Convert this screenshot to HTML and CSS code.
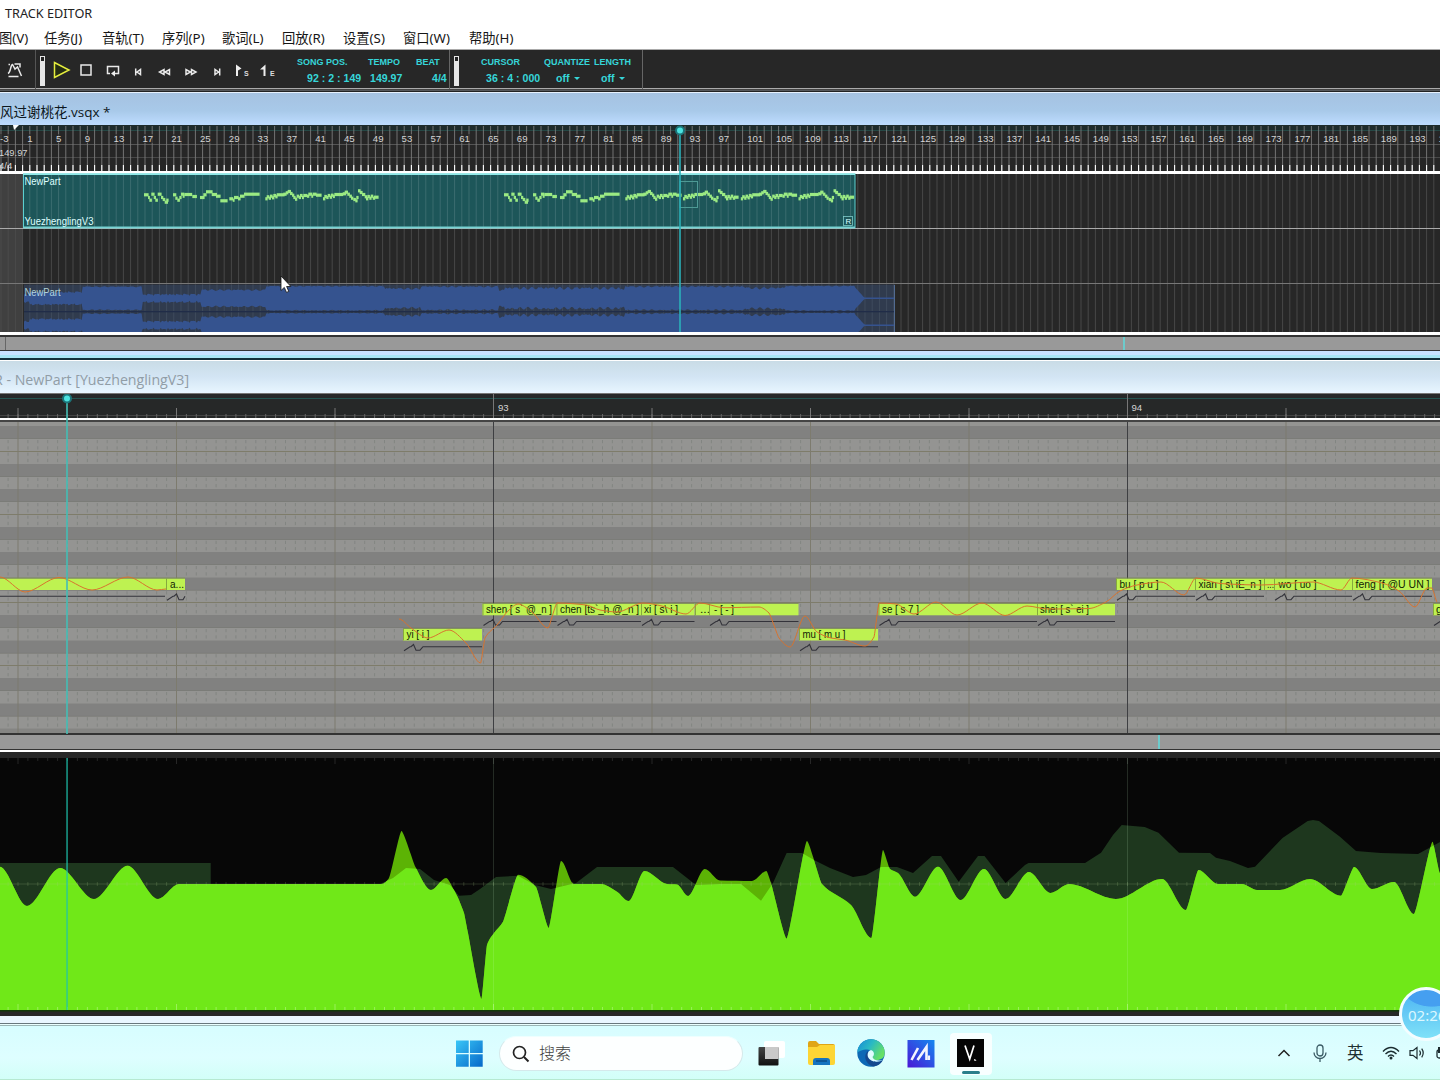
FILE: index.html
```html
<!DOCTYPE html>
<html lang="zh-CN">
<head>
<meta charset="utf-8">
<title>TRACK EDITOR</title>
<link rel="stylesheet" href="styles.css">
</head>
<body>
<div class="screen">
  <header class="titlebar">TRACK EDITOR</header>
  <nav class="menu">
    <span>图(V)</span><span>任务(J)</span><span>音轨(T)</span><span>序列(P)</span><span>歌词(L)</span><span>回放(R)</span><span>设置(S)</span><span>窗口(W)</span><span>帮助(H)</span>
  </nav>
  <div class="toolbar">
    <div class="tool tool-curve"><svg width="18" height="18" viewBox="0 0 18 18"><path d="M2 12.500C5 11 4.500 3.500 6.500 3.500L9 8l2.500-2L15.500 15M4 3.500H2.500M8.500 3H14v3.500M2.500 15.500h10" class="ic"/></svg></div>
    <div class="grip"></div>
    <div class="transport">
      <svg width="26" height="26" viewBox="0 0 26 26"><path d="M6.500 5.500v15L21 13z" fill="#252d12" stroke="#e6ee3e" stroke-width="1.500"/></svg>
      <svg width="26" height="26" viewBox="0 0 26 26"><rect x="7" y="8" width="10" height="10" class="ic"/></svg>
      <svg width="26" height="26" viewBox="0 0 26 26"><path d="M10 16.500H7.500v-7h11v7H14" class="ic"/><path d="M15 13.500v6l-4-3z" class="fl"/></svg>
      <svg width="26" height="26" viewBox="0 0 26 26"><path d="M9.700 11.500v7M14.500 12.500v5l-3.500-2.500z" class="ic"/></svg>
      <svg width="26" height="26" viewBox="0 0 26 26"><path d="M12 12.500v5L7.500 15zM17.500 12.500v5L13 15z" class="ic"/></svg>
      <svg width="26" height="26" viewBox="0 0 26 26"><path d="M8 12.500v5l4.500-2.500zM13.500 12.500v5l4.500-2.500z" class="ic"/></svg>
      <svg width="26" height="26" viewBox="0 0 26 26"><path d="M11 12.500v5l3.500-2.500zM15.700 11.500v7" class="ic"/></svg>
      <svg width="26" height="26" viewBox="0 0 26 26"><path d="M6 7.500l5.500 4-3.500 2V19H6z" class="fl"/><text x="14" y="19" class="tiny">S</text></svg>
      <svg width="26" height="26" viewBox="0 0 26 26"><path d="M9.500 7.500V19h-2v-6.500h-3.500z" class="fl"/><text x="14" y="19" class="tiny">E</text></svg>
    </div>
    <div class="fields">
      <div class="field"><b>SONG POS.</b><i class="pad-a">92 : 2 : 149</i></div>
      <div class="field"><b>TEMPO</b><i class="pad-b">149.97</i></div>
      <div class="field"><b>BEAT</b><i class="pad-c">4/4</i></div>
    </div>
    <div class="grip grip-two"></div>
    <div class="fields fields-two">
      <div class="field"><b>CURSOR</b><i class="pad-d">36 : 4 : 000</i></div>
      <div class="field"><b>QUANTIZE</b><i class="pad-e">off<u></u></i></div>
      <div class="field"><b>LENGTH</b><i class="pad-f">off<u></u></i></div>
    </div>
  </div>
  <div class="caption caption-track">风过谢桃花.vsqx *</div>
  <svg class="pane" id="track" width="1440" height="207" viewBox="0 125 1440 207"></svg>
  <div class="hscroll hscroll-track"><div class="thumb-edge"></div><div class="play-mark mark-one"></div></div>
  <div class="frame-edge"></div>
  <div class="caption caption-piano">R - NewPart [YuezhenglingV3]</div>
  <svg class="pane" id="piano" width="1440" height="340" viewBox="0 394 1440 340"></svg>
  <div class="hscroll hscroll-piano"><div class="play-mark mark-two"></div></div>
  <svg class="pane" id="param" width="1440" height="264" viewBox="0 752 1440 264"></svg>
  <div class="window-edge"></div>
  <footer class="taskbar">
    <svg class="win" width="27" height="28" viewBox="0 0 27 28"><defs><linearGradient id="gw" x1="0" y1="0" x2="1" y2="1"><stop offset="0" stop-color="#39c6f7"/><stop offset="1" stop-color="#0668c9"/></linearGradient></defs><path d="M0 .5h12.700V13H0zM14 .5h12.700V13H14zM0 14.200h12.700v12.500H0zM14 14.200h12.700v12.500H14z" fill="url(#gw)"/></svg>
    <div class="search"><svg width="18" height="18" viewBox="0 0 18 18"><circle cx="7.500" cy="7.500" r="6" fill="none" stroke="#222" stroke-width="1.700"/><path d="M12 12l4.500 4.500" stroke="#222" stroke-width="2"/></svg><span>搜索</span></div>
    <svg class="app" width="50" height="44" viewBox="0 0 50 44"><defs><linearGradient id="gt" x1="0" y1="0" x2="0" y2="1"><stop offset="0" stop-color="#444"/><stop offset="1" stop-color="#111"/></linearGradient></defs><rect x="20" y="12" width="21" height="17" rx="2" fill="#fff"/><rect x="14.500" y="18" width="20" height="18.500" rx="1" fill="url(#gt)"/><path d="M21 18h13.500v12H21z" fill="#c9c9c9"/></svg>
    <svg class="app" width="50" height="44" viewBox="0 0 50 44"><path d="M13 14q0-2 2-2h6l3 3h14q2 0 2 2v10H13z" fill="#e0a516"/><path d="M13 18h9l3-2h15v18q0 2-2 2H15q-2 0-2-2z" fill="#fdd535"/><path d="M18 36v-4q0-3 3-3h11q3 0 3 3v4z" fill="#1673bf"/><path d="M21 32h11" stroke="#0c4c89" stroke-width="1.500"/></svg>
    <svg class="app" width="50" height="44" viewBox="0 0 50 44"><defs><linearGradient id="ge" x1="0" y1="0" x2="1" y2=".5"><stop offset="0" stop-color="#1689d8"/><stop offset=".5" stop-color="#29b9c4"/><stop offset="1" stop-color="#66e067"/></linearGradient></defs><circle cx="26" cy="24" r="13.700" fill="#0d68b5"/><path d="M12.300 24a13.700 13.700 0 0 1 27.400 0c0 5-4 7-8 7-3.500 0-5.500-1.500-4.500-3 3-4-1-7.500-5-7.500-5 0-9 2-9.900 3.500z" fill="url(#ge)"/><path d="M23 22c-5 4-3 13 5 15.500 5-.5 8-3 10-6.500-5 3-12 2-14-3z" fill="#14488f"/><path d="M27.500 28c3-3 1-6-1.500-7-3 1-4 4-3 7 2 5 10 6 15 3-4 1-9 1-10.500-3z" fill="#dffcff"/></svg>
    <svg class="app" width="50" height="44" viewBox="0 0 50 44"><defs><linearGradient id="gm" x1="0" y1="1" x2="1" y2="0"><stop offset="0" stop-color="#4a16d6"/><stop offset="1" stop-color="#1488ef"/></linearGradient></defs><rect x="11.500" y="11" width="27" height="27.500" fill="url(#gm)"/><path d="M15.500 31l6.500-12M21.500 31l9-13v13" fill="none" stroke="#f4f4ff" stroke-width="2.600"/><path d="M33 26.500v4.500" stroke="#f4f4ff" stroke-width="2.200"/></svg>
    <div class="active-app"><svg width="27" height="28" viewBox="0 0 27 28"><path d="M0 0h27v28H0z" fill="#050505"/><path d="M8 6.500l4.700 13.500 4.300-13.500" fill="none" stroke="#fff" stroke-width="1.700"/><path d="M17.500 20l1.500 1.500h-1.500z" fill="#ddd" stroke="#ddd" stroke-width=".7"/></svg><div class="active-line"></div></div>
    <div class="tray">
      <svg width="14" height="10" viewBox="0 0 14 10"><path d="M1.500 8L7 2.500 12.500 8" fill="none" stroke="#222" stroke-width="1.500"/></svg>
      <svg class="mic" width="14" height="19" viewBox="0 0 14 19"><rect x="4" y="1" width="6" height="11" rx="3" fill="none" stroke="#3c5c66" stroke-width="1.300"/><path d="M1 8.500a6 6 0 0 0 12 0M7 14.500V18" fill="none" stroke="#3c5c66" stroke-width="1.300"/></svg>
      <span class="ime">英</span>
      <svg class="wifi" width="18" height="14" viewBox="0 0 18 14"><path d="M1 5.500q8-8 16 0M3.500 8q5.500-5.500 11 0M6 10.500q3-3 6 0" fill="none" stroke="#1b2c30" stroke-width="1.400"/><circle cx="9" cy="12" r="1.500" fill="#1b2c30"/></svg>
      <svg class="vol" width="17" height="14" viewBox="0 0 17 14"><path d="M1 4.700h3L8 1.500v11L4 9.300H1zM10.500 4.500q2 2.500 0 5M12.700 2.700q3 4.300 0 8.600" fill="none" stroke="#1b2c30" stroke-width="1.200"/></svg>
      <svg class="bat" width="16" height="14" viewBox="0 0 16 14"><rect x="1" y="4" width="14" height="8" rx="2" fill="none" stroke="#1b2c30" stroke-width="1.300"/><path d="M2 1h6v6H2z" fill="#1b2c30"/></svg>
    </div>
  </footer>
  <div class="clock"><span>02:26</span></div>
  <svg class="pointer" width="12" height="19" viewBox="0 0 12 19"><path d="M1 1v14.500l3.300-3.100 2.200 5 2.300-1-2.200-4.900h4.300z" fill="#fff" stroke="#111" stroke-width=".8"/></svg>
</div>
<script src="editor.js"></script>
</body>
</html>
```
FILE: styles.css
```css
* { box-sizing: border-box; }
body { margin: 0; background: #272727; font-family: "Open Sans", "Noto Sans CJK SC", sans-serif; }
.screen { position: relative; width: 1440px; height: 1080px; overflow: hidden; display: flex; flex-direction: column; }
.screen > * { flex: none; }
.titlebar { height: 26px; background: #fff; color: #222; font: 12.700px/26px "Noto Sans", sans-serif; padding-left: 5px; }
.menu { height: 24px; background: #fff; border-bottom: 1px solid #aaa; display: grid; grid-template-columns: 45px 58px 60px 60px 60px 61px 60px 66px 60px; margin: 0; padding-left: 0; text-indent: -1px; font: 13.300px/24px "Noto Sans", "Noto Sans CJK SC", sans-serif; color: #161616; white-space: nowrap; }
.toolbar { height: 42px; background: #272727; border-bottom: 1px solid #222; box-shadow: inset 0 -1px #55575a, inset 0 -2px #444, inset 0 -3px #aaa; display: flex; }
.tool-curve { width: 36px; padding: 11px 0 0 6px; border-right: 1px solid #555; height: 39px; }
.grip { width: 5px; height: 30px; margin: 6px 3px 0 4px; background: #e6e6e6; padding: 1px; }
.grip::before { content: ""; display: block; width: 3px; height: 4px; background: #222; }
.grip-two { margin-left: 4px; }
.transport { display: flex; width: 249px; padding-top: 7px; }
.ic { fill: none; stroke: #e9e9e9; stroke-width: 1.5; }
.fl { fill: #eee; }
.tiny { font: bold 7px "Liberation Sans", sans-serif; fill: #ddd; }
.fields { display: grid; grid-template-columns: 71px 48px 33px; width: 153px; height: 39px; border-right: 1px solid #666; padding-top: 6px; color: #36d6d9; font-family: "Liberation Sans", sans-serif; }
.fields-two { margin-left: 19px; width: 162px; grid-template-columns: 63px 50px 40px; }
.field { display: flex; flex-direction: column; white-space: nowrap; }
.field b { font-size: 9px; line-height: 12px; letter-spacing: 0; }
.field i { font: bold 10.600px/14px "Liberation Sans", sans-serif; margin-top: 3px; }
.field u { display: inline-block; border: 3px solid transparent; border-top-color: #36d6d9; border-bottom: 0; margin: 0 0 2px 4px; }
.pad-a { padding-left: 10px; } .pad-b { padding-left: 2px; } .pad-c { padding-left: 16px; }
.pad-d { padding-left: 5px; } .pad-e { padding-left: 12px; } .pad-f { padding-left: 7px; }
.caption { height: 33px; white-space: nowrap; }
.caption-track { background: linear-gradient(#a5c2e1, #a8c9e9 55%, #bedcff); border-top: 1px solid #e6f1fd; font: 13.500px/38px "Open Sans", "Noto Sans CJK SC", sans-serif; color: #0d1720; }
.caption-piano { height: 34px; background: linear-gradient(#c9dce6, #d3e5f4 50%, #e8f6ff); border-top: 1px solid #fff; border-bottom: 1px solid #777; font: 14.200px/38px "Open Sans", sans-serif; color: #919da6; text-indent: -6px; }
.pane { display: block; }
.hscroll { background: #999; display: flex; }
.hscroll-track { height: 19px; border-top: 3px solid #fff; border-bottom: 1px solid #333; box-shadow: inset 0 2px #333; }
.thumb-edge { width: 6px; border-right: 1px solid #666; margin-top: 2px; }
.play-mark { width: 2px; background: #6dcbcc; }
.mark-one { margin: 2px 0 0 1117px; }
.mark-two { margin-left: 1158px; }
.frame-edge { height: 9px; background: linear-gradient(#c8e2ff 0 4px, #a8e5f4 4px 7px, #14303b 7px); }
.hscroll-piano { height: 18px; border-top: 1px solid #333; border-bottom: 2px solid #fff; box-shadow: inset 0 -1px #333; padding-bottom: 1px; }
.window-edge { height: 10px; background: linear-gradient(#e9f6ff 0 7px, #68777d 7px 8px, #eaffff 8px 9px, #9bb5b6 9px); }
.taskbar { height: 54px; background: linear-gradient(#d7fdff, #defeff 60%, #d2fff8); border-bottom: 1px solid #b6e9d1; display: flex; padding-left: 456px; position: relative; }
.win { margin-top: 14px; }
.search { width: 244px; height: 35px; margin: 10px 0 0 16px; border-radius: 18px; background: #fdffff; border: 1px solid #d5e9eb; border-top-color: #eff; display: flex; align-items: center; padding-left: 12px; gap: 9px; color: #414141; font: 300 16px/24px "Noto Sans CJK SC", sans-serif; }
.search span { margin-top: -3px; }
.search + .app { margin-left: 1px; }
.app { margin-top: 3px; }
.app + .app { margin-left: .5px; }
.active-app { width: 42px; height: 42px; background: #f8ffff; border-radius: 4px; margin: 7px 0 0 4.500px; padding: 6px 7px 0; }
.active-app svg { display: block; }
.active-line { width: 18px; height: 3px; margin: 4px 0 0 5px; border-radius: 2px; background: #2b7f8b; }
.tray { margin-left: auto; width: 163px; display: flex; align-items: center; height: 54px; overflow: hidden; }
.tray > * { flex: none; }
.mic { margin-left: 22px; }
.ime { font: 16.500px/24px "Noto Sans CJK SC", sans-serif; margin: -2px 0 0 20px; color: #1f3033; }
.wifi { margin-left: 18px; } .vol { margin-left: 9px; } .bat { margin-left: 10px; }
.clock { position: absolute; left: 1399px; top: 987px; width: 54px; height: 54px; border-radius: 50%; border: 3px solid #f3fdff; background: radial-gradient(ellipse 40px 26px at 30px -2px, #459ff0 70%, transparent 73%), linear-gradient(#4cb3f2, #7fe1f8); font: 15px/50px "Noto Sans", sans-serif; color: #dcf8ff; padding-left: 6px; white-space: nowrap; }
.pointer { position: absolute; left: 280px; top: 275px; }
.ruler-text { font: 9.600px "Liberation Sans", sans-serif; fill: #d4d4d4; }
.part-text { font: 10px "Liberation Sans", sans-serif; fill: #dff; }
.note-text { font: 10.500px "Liberation Sans", sans-serif; fill: #101c04; }
```
FILE: editor.js
```js
const R = (x, y, w, h, f, extra = '') => `<rect x="${x}" y="${y}" width="${w}" height="${h}" fill="${f}" ${extra}/>`;
const T = (x, y, c, s, extra = '') => `<text x="${x}" y="${y}" class="${c}" ${extra}>${s}</text>`;
const P = (d, stroke, w = 1, fill = 'none', extra = '') => `<path d="${d}" stroke="${stroke}" stroke-width="${w}" fill="${fill}" ${extra}/>`;
const fit = w => `textLength="${w}" lengthAdjust="spacingAndGlyphs"`;

// Smooth curve through the points, flat at local extremes
function smooth(p, k = 0.31) {
  const n = p.length, m = p.map((q, i) => {
    if (!i || i === n - 1) return 0;
    const a = (q[1] - p[i - 1][1]) / (q[0] - p[i - 1][0]), b = (p[i + 1][1] - q[1]) / (p[i + 1][0] - q[0]);
    return a * b <= 0 ? 0 : 2 * a * b / (a + b);
  });
  let d = `M${p[0]}`;
  for (let i = 1; i < n; i++) {
    const w = p[i][0] - p[i - 1][0], steep = Math.abs(p[i][1] - p[i - 1][1]) / w > 2.2;
    const h = w * (steep ? k * 0.5 : k);
    d += `C${p[i - 1][0] + h} ${p[i - 1][1] + h * m[i - 1]} ${p[i][0] - h} ${p[i][1] - h * m[i]} ${p[i]}`;
  }
  return d;
}
const playhead = (x, y) => `<circle cx="${x}" cy="${y}" r="5" fill="#1c7478"/><circle cx="${x}" cy="${y}" r="3" fill="#4be3e0"/>`;

// ---------- Track editor ----------
const BAR = 7.2, X1 = 22.6;
let s = R(0, 125, 1440, 46, '#262626') + R(0, 125, 1440, 6, '#1f2b2c') + R(0, 130, 1440, 1, '#254845')
  + R(0, 144, 1440, 1, '#555') + R(0, 157, 1440, 1, '#474747');
let rulerLines = '', ticks = '', grid = '';
for (let i = -3; X1 + i * BAR < 1440; i++) {
  const x = (X1 + i * BAR).toFixed(1);
  rulerLines += `M${x} 126V171`; ticks += `M${x} 165V171`; grid += `M${x} 174V332`;
}
s += P(rulerLines, '#7c7c7c', 0.9) + P(ticks, '#fff', 1.1);
for (let b = -3; b < 198; b += 4) {
  const x = b < 0 ? 0 : X1 + (b - 1) * BAR + 4.6, w = String(b).length * 5.4;
  s += R(x, 134, w, 9, '#262626', 'opacity=".6"') + T(x, 142.3, 'ruler-text', b);
}
s += T(-1, 155.500, 'ruler-text', '149.97', fit(28.5)) + T(-1, 168.500, 'ruler-text', '4/4') + '<path d="M13 125h6l-5 5z" fill="#fff"/>';
s += R(0, 171, 1440, 3, '#fff') + R(0, 174, 1440, 158, '#272727') + R(0, 174, 23, 158, '#404040') + P(grid, '#4c4c4c', 0.9);
s += R(0, 228, 1440, 1, '#aaa') + R(0, 283, 1440, 1, '#777');
s += R(23.500, 174, 831.500, 53.500, '#1d5659', 'stroke="#5cd0d0"') + P(grid.replace(/V332/g, 'V227'), '#427275', 0.8, 'none', 'clip-path="url(#cp)"')
  + '<clipPath id="cp"><rect x="24" y="174" width="830" height="53"/></clipPath>' + R(23, 173.500, 832, 1.500, '#8de9e8') + R(23, 226.500, 832, 2, '#76d2d2');
const riffs = [
  [432,100,12],[444,108,4],[448,116,6],[454,98,8],[461,108,5],[466,116,6],[473,98,10],[483,108,5],[488,114,6],[494,122,8],[499,116,5],
  [519,100,8],[526,110,5],[532,116,6],[538,108,5],[543,98,8],[548,104,4],[553,99,22],[577,105,12],
  [600,108,12],[610,100,8],[618,91,18],[635,99,14],[648,104,12],[661,118,20],
  [688,112,10],[698,116,4],[702,108,12],[714,112,6],[720,104,12],[732,98,45]];
const riffEnd = [[796,112,5],[800,106,6],[806,110,5],[810,104,6],[816,109,5],[820,102,7],[826,106,5],[830,100,22],[850,98,8],[857,94,6],[863,90,8],[870,96,6],[876,101,5],[880,108,5],[885,113,5],[890,104,6],[896,108,5],[900,102,6],[906,108,4],[910,102,10],[921,104,5],[925,98,10],[934,104,4],[938,98,10],[948,101,15],
  [969,112,5],[973,105,6],[979,108,5],[983,102,6],[989,107,5],[993,101,6],[999,105,4],[1003,99,25],[1028,97,8],[1034,92,8],[1042,98,6],[1048,104,6],[1053,110,5],[1060,114,6],[1066,118,5],[1069,108,5],[1074,88,6],[1079,93,7],[1086,99,8],[1094,106,5],[1098,112,5],[1102,105,6],[1108,110,5],[1112,104,6],[1118,110,5],[1122,107,12]];
const dots = (a, dx) => a.map(q => R((q[0] / 3 + dx).toFixed(1), (q[1] / 3 + 159.9).toFixed(1), (q[2] / 3 + 0.6).toFixed(1), 3.2, '#9bea83')).join('');
s += dots(riffs, 0) + dots(riffEnd, 0) + dots(riffs, 360) + dots(riffEnd, 360) + dots(riffEnd, 475.500);
s += T(24.500, 185.3, 'part-text', 'NewPart', fit(36)) + T(24.500, 225, 'part-text', 'YuezhenglingV3', fit(69));
s += R(843.500, 216.500, 9, 9, '#1d5659', 'stroke="#7ec9c9" stroke-width=".8"') + T(845.500, 224.300, 'part-text', 'R', 'style="font-size:8px"');
s += R(680, 181.500, 17.500, 26, 'none', 'stroke="#4e9a95"');
// Audio part: stereo envelope [until x, half height, jitter]
s += R(24, 284.500, 871, 47.500, '#303b4e') + P(grid.replace(/M(\S+) 174V332/g, (m, x) => x > 24 && x < 895 ? `M${x} 285V332` : ''), '#434f61', 0.8);
const env = [[29,5,2],[82,7,1.500],[142,12,1],[201,4.500,1],[266,9,1.700],[384,12.5,1],[420,10.5,2],[499,12.3,1.500],[505,9,2],[620,11.3,2.800],[625,9.5,2],[745,12.3,1.500],[786,11.2,2.300],[855,12.6,.8]];
const upA = [], loA = [], upB = [], loB = [];
for (let x = 24, k = 0; x < 895; x += 1.200, k++) {
  const e = env.find(v => x < v[0]);
  let h = e ? e[1] - Math.abs(Math.sin(k * 12.989) * Math.sin(k * 0.520)) * e[2] : Math.max(.7, 11 - (x - 855) * 1.1);
  if (e && (x < 82 || x > 142) && x < 201 && k % 6 === 0) h -= 1.500;
  upA.push([x.toFixed(1), (298.3 - h).toFixed(1)]); loA.unshift([x.toFixed(1), (298.3 + h).toFixed(1)]);
  upB.push([x.toFixed(1), (325.2 - h).toFixed(1)]); loB.unshift([x.toFixed(1), Math.min(332, 325.2 + h).toFixed(1)]);
}
s += P('M' + upA.concat(loA).join('L') + 'Z', 'none', 0, '#35538f') + P('M' + upB.concat(loB).join('L') + 'Z', 'none', 0, '#35538f');
s += R(24, 311, 871, 1.300, '#202c48') + R(894, 285, 1, 47, '#526b91') + T(24.500, 296.3, 'part-text', 'NewPart', fit(36) + ' opacity=".75"');
s += R(679.2, 131, 1.6, 201, '#2bb0b8') + playhead(680, 130.500);
document.getElementById('track').innerHTML = s;

// ---------- Piano roll ----------
s = R(0, 394, 1440, 24, '#262828') + R(0, 398, 1440, 1, '#245450') + R(0, 415, 1440, 1, '#444') + R(0, 418, 1440, 2, '#fff') + R(0, 420, 1440, 2, '#444')
  + R(0, 422, 1440, 312, '#949492');
const STEP = 9.906;
let small = '', dash = '';
for (let i = -50; i < 97; i++) {
  const x = (493.500 + i * STEP).toFixed(1);
  small += `M${x} 414V418`;
  if (i % 16) dash += `M${x} 440V733`;
}
s += P(small, '#666') + P(dash, '#7e827d', 0.8, 'none', 'stroke-dasharray="3.2 3.1"');
for (const y of [426, 464, 489, 527, 552, 577.500, 615, 640.500, 678, 703.500]) s += R(0, y, 1440, 12.700, '#818180') + R(0, y + 12.400, 1440, .6, '#767770');
s += R(0, 728.500, 1440, 5, '#858583');
for (const y of [451, 514, 602, 665]) s += R(0, y, 1440, 1, '#7e7c6a');
for (let i = -3; i < 6; i++) {
  const x = 493 + i * 158.500, bar = i % 4 === 0;
  s += R(x, 422, 1, 311, bar ? '#3e3f42' : '#7d7b6e') + R(x, bar ? 394 : 408, 1, bar ? 24 : 10, '#777');
}
s += T(498, 410.500, 'ruler-text', '93') + T(1131.500, 410.500, 'ruler-text', '94') + R(0, 733, 1440, 1, '#333');
const A = 578.500, B = 603.800, C = 629;
const notes = [[-20,166,A,''],[166,185,A,'a...',170,14],[403,482,C,'yi [ i ]',406.500,23],[482.500,556.500,B,'shen [ s` @_n ]',486,66],[556.500,641,B,'chen [ts`_h @_n ]',560,79],[641,694.500,B,'xi [ s\\ i ]',644,34],[695,709,B,'...',700,10,1],[709,798.500,B,'- [ - ]',714,20],[799,878,C,'mu [ m u ]',802.500,43],[878.500,1037,B,'se [ s 7 ]',882,37],[1037,1115,B,'shei [ s` ei ]',1040,49],[1116,1195,A,'bu [ p u ]',1119.500,39],[1195,1264,A,'xian [ s\\ iE_n ]',1198.500,63],[1264,1274,A,'...',1267,7,1],[1274,1352,A,'wo [ uo ]',1278.500,38],[1352,1432,A,'feng [f @U UN ]',1355.500,74],[1433,1500,B,'g',1436,6]];
for (const [a, b, y, t, tx, tw, plain] of notes) {
  s += R(a, y, b - a, 11.500, '#bef251') + R(a, y, 1, 11.500, '#86a93d') + R(a, y - .8, b - a, .8, '#7e9151');
  const q = y + 17.700;
  if (!t) s += P(`M0 ${q}H165`, '#33333a', 1.1);
  else if (!plain) {
    const end = b > a + 22 ? `L${a + 20} ${q}H${b}` : `L${a + 19} ${q}`;
    s += P(`M${a + 1} ${q + 4}L${a + 7} ${q}H${a + 8}L${a + 10.500} ${q - 2.200}L${a + 13} ${q + 3.500}H${a + 17}${end}`, '#33333a', 1.1);
  }
  if (t) s += T(tx, y + 9.300, 'note-text', t, fit(tw));
}
const pitchA = [[0,577],[25,592],[59,577.500],[92,590],[128,577],[157,590],[166,589]];
const pitchB = [[399,619],[411,628],[428,638],[449,630],[466,643],[480.600,663],[485,638],[497,625],[509,610],[518,604],[531,611],[548,628],[557,603],[586,605],[600,610],[617,612],[643,603],[662,606],[686,614],[700,603],[724,607.700],[759,607],[769,613],[779,638],[790,647],[805,616],[817,632],[831,638],[845,640],[865,646],[874,637],[879,603],[896,604],[914,614],[936,602],[957,615],[982,603],[1005,615.500],[1027,606],[1048,609],[1089,608.500],[1106,602],[1120,591],[1137,585],[1161,582],[1184,595],[1196,578],[1220,583.500],[1261,585],[1313,582],[1341,590],[1352,578],[1382,583],[1399,591],[1415,607],[1427,588],[1432,588],[1437,602]];
s += P(smooth(pitchA), '#d8732e', 1) + P(smooth(pitchB), '#d8732e', 1);
s += R(66.2, 399, 1.600, 335, '#45bdb5') + playhead(67, 398.500);
document.getElementById('piano').innerHTML = s;

// ---------- Control parameter ----------
const green = [[0,866.700],[27,906],[60,868],[94,899],[127.600,865.700],[158,899],[179,884],[382,884],[389,878],[401.500,831],[415.500,867],[431,890],[446,878],[454,890],[459,900],[464,913],[468,933],[481.500,999],[487,945],[494,933],[503,921.700],[518,874.700],[536,887],[548.700,928],[561,861],[574,884],[601,884],[617,891.700],[628.600,901],[644.600,871],[667,884],[677,884.500],[688,896],[704.800,869],[720,880.500],[752,881],[766.500,871],[771,883],[786.600,938.700],[807,841],[822,884],[851,905],[871.500,938],[883,850],[890,869],[898,873],[915,896.700],[938,866.700],[960.600,900],[984,869],[1005.600,899],[1029,872],[1050.600,893],[1069,884],[1116,899],[1162,879],[1186,910],[1198.400,870],[1218,884],[1242,884],[1257,890],[1280,890],[1310,879],[1341,895.700],[1354,867],[1372,889],[1394,882],[1414,914],[1432.600,841.700],[1440,873]];
const shade = 'M0 1010V863H210.700V884H380L393 878 406 868 420 869 434 880 450 885 459 895.700 471 895 480 889 496 877 518 875.700 535 885 551 889 576 883 597 867H673L696 885 720 884H741L761 900.700 773 883 786.600 853H802L814 860 830 868 853 877 866 875 881 867H897L913 873 932 856H941L958.700 881.700 978 856H984.500L1005.600 883 1025 865 1028.500 863H1085L1101 852.700 1113 835 1121.700 825 1144.700 827 1158.500 832.700 1179 852.700 1210 853 1216 857.700 1230 861 1248 868 1255 866.700 1282.500 838 1307.700 821 1313 820 1319 821 1340 836.700 1356 851 1381 853 1418 854 1440 842V1010Z';
const area = smooth(green) + 'V1010H0Z';
s = R(0, 752, 1440, 264, '#272727') + R(0, 758, 1440, 252, '#070707') + '<clipPath id="sh"><path d="' + shade + '"/></clipPath>'
  + P(shade, 'none', 0, '#1e371e') + P(area, 'none', 0, '#5cb305') + P(area, 'none', 0, '#70e818', 'clip-path="url(#sh)"');
let up = '', mid = '', low = '';
for (let i = -50; i < 97; i++) {
  const x = (493.500 + i * STEP).toFixed(1), big = i % 16 === 0 ? 3 : 0;
  up += `M${x} 758V${761 + big}`; mid += `M${x} 882V886`; low += `M${x} ${1007 - big}V1010`;
}
s += P(up, '#262626') + P(mid + 'M0 884H1440', '#adcb8b', .8, 'none', 'opacity=".25"') + P(low, '#a5f36b', .8);
for (const x of [493, 1127]) s += R(x, 758, 1, 252, '#d0ffd0', 'opacity=".15"');
s += R(66.300, 758, 1.500, 252, '#1ec3ad', 'opacity=".8"') + R(0, 1010, 1440, 1.500, '#123908');
document.getElementById('param').innerHTML = s;
```
